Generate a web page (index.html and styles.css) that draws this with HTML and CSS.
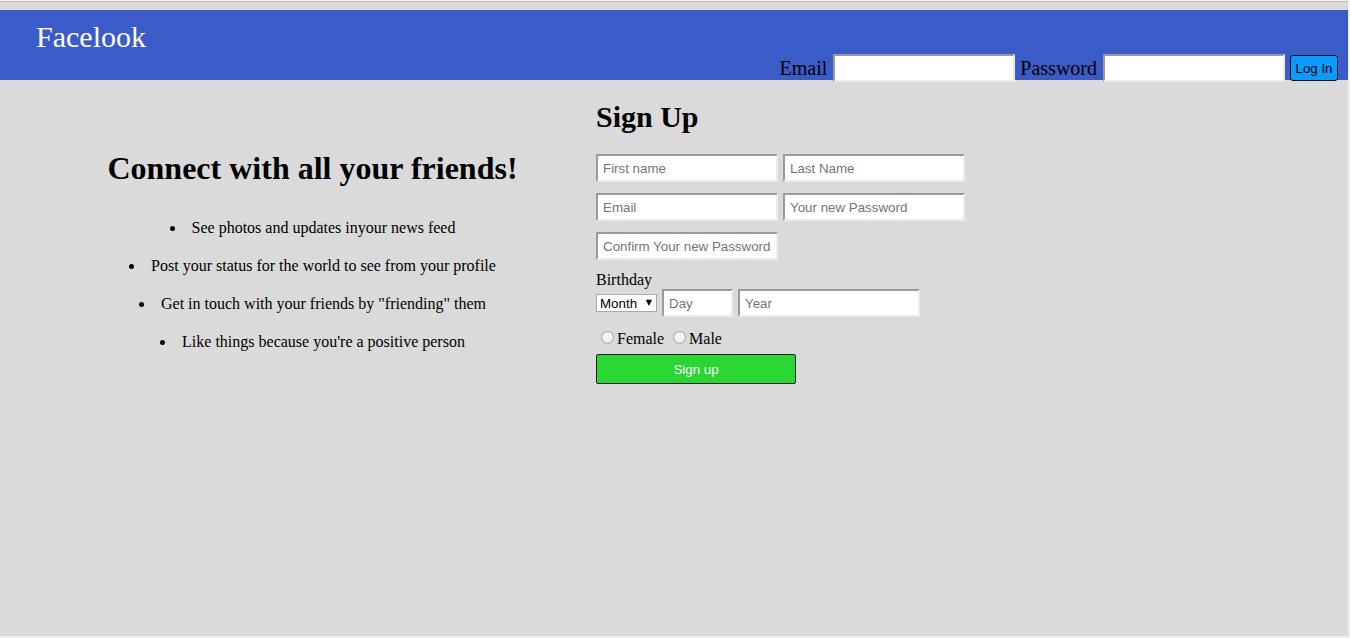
FILE: index.html
```html
<!DOCTYPE html>
<html lang="en">
<head>
<meta charset="utf-8">
<title>Facelook</title>
<link rel="stylesheet" href="styles.css">
</head>
<body>
<div class="page">
  <header class="header">
    <div class="logo">Facelook</div>
    <form class="login">
      <label class="login-label">Email</label>
      <input class="field" type="text">
      <label class="login-label">Password</label>
      <input class="field" type="password">
      <button class="login-btn" type="button">Log In</button>
    </form>
  </header>
  <main class="main">
    <section class="intro">
      <h1 class="intro-title">Connect with all your friends!</h1>
      <ul class="features">
        <li>See photos and updates inyour news feed</li>
        <li>Post your status for the world to see from your profile</li>
        <li>Get in touch with your friends by "friending" them</li>
        <li>Like things because you're a positive person</li>
      </ul>
    </section>
    <section class="signup">
      <h1 class="signup-title">Sign Up</h1>
      <div class="row">
        <input class="field" type="text" placeholder="First name">
        <input class="field" type="text" placeholder="Last Name">
      </div>
      <div class="row">
        <input class="field" type="text" placeholder="Email">
        <input class="field" type="password" placeholder="Your new Password">
      </div>
      <div class="row">
        <input class="field" type="password" placeholder="Confirm Your new Password">
      </div>
      <div class="birthday-label">Birthday</div>
      <div class="row row-bday">
        <span class="select-wrap"><select class="month"><option>Month</option></select></span>
        <input class="field field-day" type="text" placeholder="Day">
        <input class="field" type="text" placeholder="Year">
      </div>
      <div class="gender"><input class="radio" type="radio" name="gender">Female <input class="radio" type="radio" name="gender">Male</div>
      <button class="signup-btn" type="button">Sign up</button>
    </section>
  </main>
</div>
</body>
</html>
```

FILE: styles.css
```css
html, body {
  margin: 0;
  padding: 0;
}
body {
  background: #efefef;
  font-family: "Liberation Serif", "Times New Roman", serif;
  font-size: 16px;
  color: #000;
}
.page {
  width: 1348px;
  height: 634px;
  margin-top: 1px;
  border-top: 1px solid #bdbdbd;
  background: #dadada;
  overflow: hidden;
}
.header {
  display: flex;
  justify-content: space-between;
  height: 70px;
  margin-top: 8px;
  padding: 0 10px 0 36px;
  background: #3a5bc8;
}
.logo {
  align-self: flex-start;
  margin-top: 10px;
  color: #fff;
  font-size: 30px;
}
.login {
  align-self: flex-end;
  display: flex;
  align-items: center;
  gap: 5px;
  margin: 0 0 -2px 0;
}
.login-label {
  font-size: 20px;
  margin-right: 1px;
}
.field {
  box-sizing: border-box;
  width: 182px;
  height: 28px;
  margin: 0;
  padding: 0 5px;
  border: 2px solid;
  border-color: #9a9a9a #ececec #ececec #9a9a9a;
  background: #fff;
  font-family: "Liberation Sans", Arial, sans-serif;
  font-size: 13.33px;
  color: #000;
  outline: none;
}
.field::placeholder {
  color: #757575;
}
.login-btn {
  box-sizing: border-box;
  width: 48px;
  height: 26px;
  padding: 0;
  border: 1px solid #111;
  border-radius: 3px;
  background: #0c9bff;
  font-family: "Liberation Sans", Arial, sans-serif;
  font-size: 13.33px;
  color: #000;
}
.main {
  display: flex;
  align-items: flex-start;
  padding-left: 100px;
}
.intro {
  width: 425px;
  padding-top: 70px;
  text-align: center;
}
.intro-title {
  margin: 0;
  font-size: 32px;
  font-weight: bold;
}
.features {
  margin: 32px 0 0 22px;
  padding: 0;
  list-style: none;
}
.features li {
  position: relative;
  width: fit-content;
  margin: 0 auto 20px;
  line-height: 18px;
}
.features li::before {
  content: "";
  position: absolute;
  left: -22px;
  top: 7px;
  width: 5px;
  height: 5px;
  border-radius: 50%;
  background: #000;
}
.signup {
  margin-left: 71px;
  padding-top: 20px;
}
.signup-title {
  margin: 0 0 20px 0;
  font-size: 30px;
  font-weight: bold;
}
.row {
  display: flex;
  gap: 5px;
  margin-bottom: 11px;
}
.birthday-label {
  line-height: 18px;
}
.row-bday {
  align-items: center;
  margin-bottom: 0;
}
.field-day {
  width: 71px;
}
.select-wrap {
  position: relative;
  display: inline-block;
}
.select-wrap::after {
  content: "▼";
  position: absolute;
  right: 5px;
  top: 4px;
  font-family: "DejaVu Sans", sans-serif;
  font-size: 8px;
  color: #000;
  pointer-events: none;
}
.month {
  appearance: none;
  -webkit-appearance: none;
  box-sizing: border-box;
  display: block;
  width: 61px;
  height: 18px;
  margin: 0;
  padding: 0 0 0 3px;
  border: 1px solid #a9a9a9;
  border-radius: 0;
  background: #fff;
  font-family: "Liberation Sans", Arial, sans-serif;
  font-size: 13.33px;
  color: #000;
}
.gender {
  margin-top: 11px;
}
.radio {
  appearance: none;
  -webkit-appearance: none;
  box-sizing: border-box;
  width: 13px;
  height: 13px;
  margin: 3px 3px 0 5px;
  border: 1px solid #a8a8a8;
  border-radius: 50%;
  background: radial-gradient(circle at 50% 40%, #fdfdfd 0%, #ececec 60%, #d6d6d6 100%);
  vertical-align: baseline;
}
.signup-btn {
  display: block;
  box-sizing: border-box;
  width: 200px;
  height: 30px;
  margin-top: 6px;
  padding: 0;
  border: 1px solid #1a1a1a;
  border-radius: 2px;
  background: #29d632;
  font-family: "Liberation Sans", Arial, sans-serif;
  font-size: 13.33px;
  color: #fff;
}
```
